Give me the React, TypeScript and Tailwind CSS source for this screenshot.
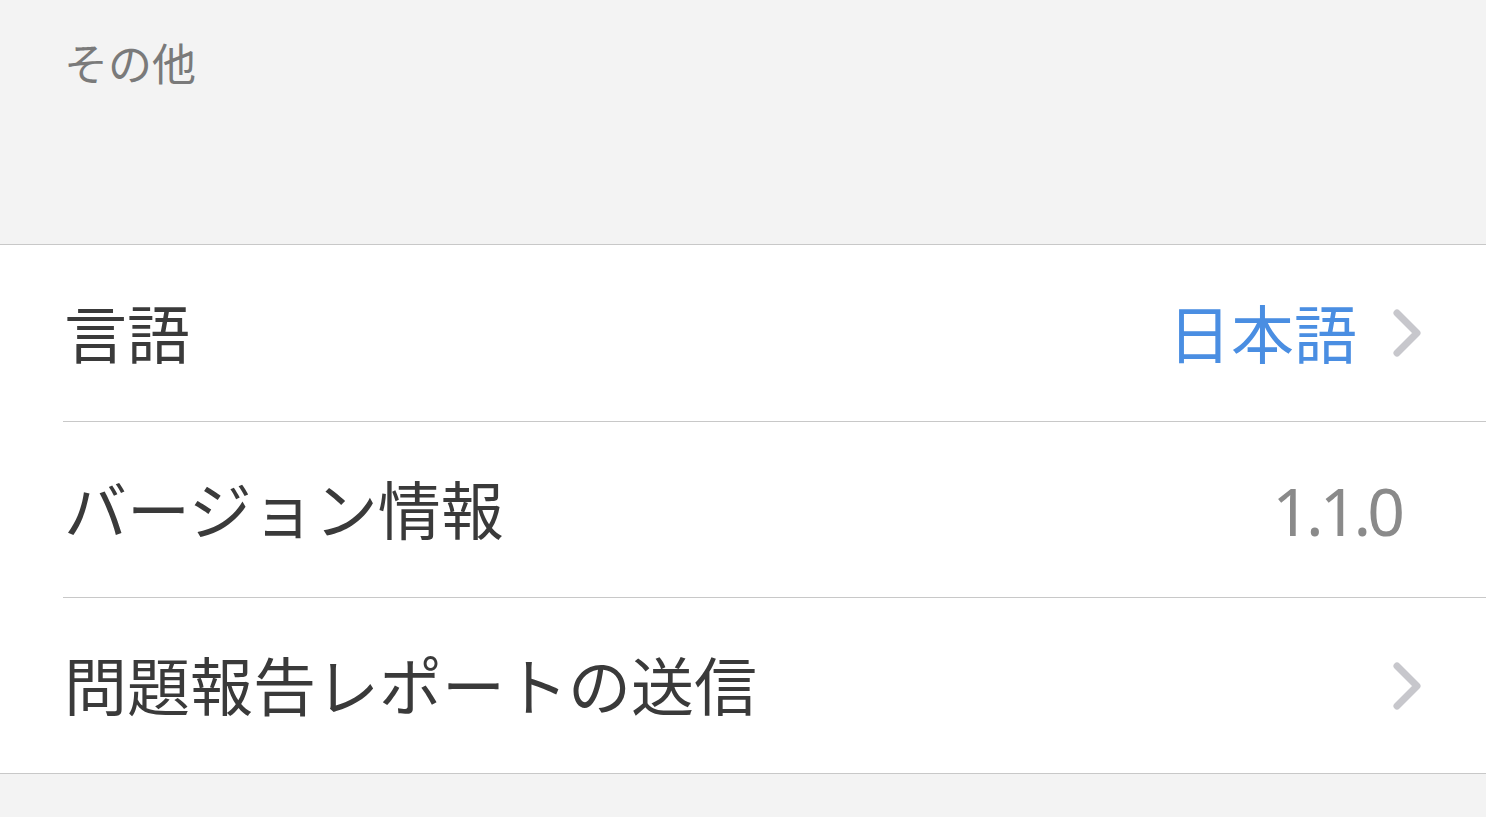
import React from "react";

const font = { fontFamily: '"Noto Sans", "Noto Sans CJK JP", sans-serif' };

function Chevron() {
  return (
    <svg width="32" height="50" viewBox="0 0 32 50" className="shrink-0">
      <path d="M6 5 L26 25 L6 45" fill="none" stroke="#c7c7cc" strokeWidth="7" strokeLinecap="round" strokeLinejoin="round" />
    </svg>
  );
}

export default function App() {
  return (
    <div className="w-[1486px] h-[817px] bg-[#f3f3f3] overflow-hidden" style={font}>
      <div className="h-[244px] pl-[64px] pt-[38px]">
        <div className="text-[44px] leading-[52px] text-[#7a7a7a]">その他</div>
      </div>
      <div className="bg-white border-y border-[#c8c8c8]">
        <div className="ml-[63px] border-b border-[#c8c8c8]">
          <div className="h-[176px] flex items-center pl-[1px] pr-[63px]">
            <div className="flex-1 text-[63px] text-[#3a3a3a] leading-none">言語</div>
            <div className="text-[63px] text-[#4a8ee2] leading-none mr-[34px]">日本語</div>
            <Chevron />
          </div>
        </div>
        <div className="ml-[63px] border-b border-[#c8c8c8]">
          <div className="h-[175px] flex items-center pl-[1px] pr-[85px]">
            <div className="flex-1 text-[63px] text-[#3a3a3a] leading-none">バージョン情報</div>
            <div className="text-[66px] text-[#8a8a8a] leading-none tracking-[-4px]">1.1.0</div>
          </div>
        </div>
        <div className="h-[175px] flex items-center pl-[64px] pr-[63px]">
          <div className="flex-1 text-[63px] text-[#3a3a3a] leading-none">問題報告レポートの送信</div>
          <Chevron />
        </div>
      </div>
    </div>
  );
}
